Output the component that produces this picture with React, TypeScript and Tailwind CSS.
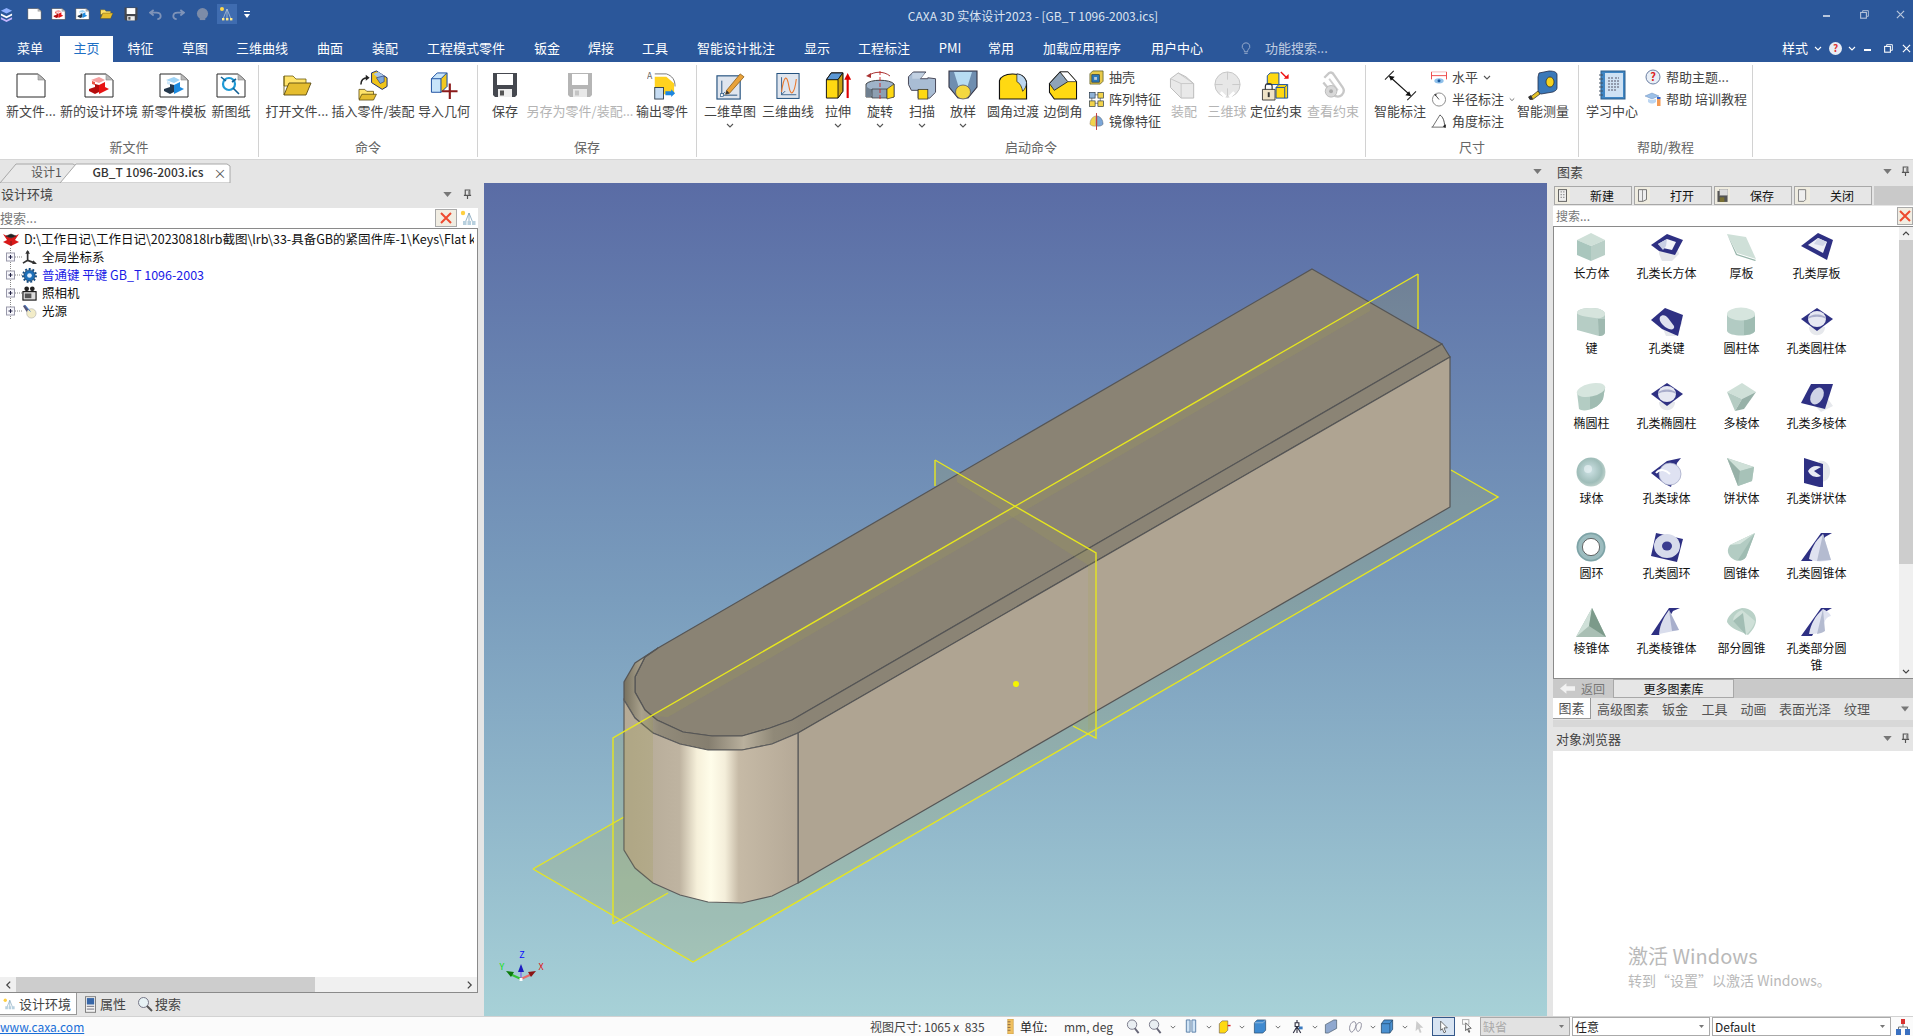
import React from 'react';

const Chev = ({ className = 'w-[8px] h-[5px]', stroke = '#555' }: { className?: string; stroke?: string }) => (
  <svg viewBox="0 0 8 5" className={className}>
    <path d="M1 1l3 3 3-3" fill="none" stroke={stroke} strokeWidth="1.1" />
  </svg>
);

const Tri = ({ className = 'w-[11px] h-[6px]' }: { className?: string }) => (
  <svg viewBox="0 0 10 6" className={className}>
    <path d="M0 0h10L5 6z" fill="#777" />
  </svg>
);

const Pin = () => (
  <svg viewBox="0 0 10 12" className="w-[9px] h-[11px]">
    <path d="M2.5 1h5v6h-5zM1 7h8M5 7v4" fill="none" stroke="#555" strokeWidth="1.3" />
    <path d="M5.5 1.5h1.6v5H5.5z" fill="#999" />
  </svg>
);

// ---- quick access / ribbon icons ----
const Doc = ({ children, className = 'w-[30px] h-[25px]' }: { children?: React.ReactNode; className?: string }) => (
  <svg viewBox="0 0 30 25" className={className}>
    <path d="M1 1h21l7 6v17H1z" fill="#fff" stroke="#2a2a2a" strokeWidth="1" />
    <path d="M22 1l7 6h-7z" fill="#b9b9b9" stroke="#888" strokeWidth="0.6" />
    {children}
  </svg>
);

const RedArt = () => (
  <g>
    <path d="M7 7l8-3 6 3-6 3z" fill="#f6a0a0" />
    <path d="M5 16l6-2v-3l4 1v7l-4 2-6-3z" fill="#b50d0d" />
    <path d="M15 12l6-3v5l4 2-10 5z" fill="#e81414" />
    <path d="M8 8l3 1v3l-3-1z" fill="#e54" />
  </g>
);

const BlueArt = () => (
  <g>
    <path d="M7 7l8-3 6 3-6 3z" fill="#9fd3f5" />
    <path d="M5 16l6-2v-3l4 1v7l-4 2-6-3z" fill="#24384d" />
    <path d="M15 12l6-3v5l4 2-10 5z" fill="#1d8be0" />
    <path d="M8 8l3 1v3l-3-1z" fill="#cfe8fa" />
  </g>
);

const DrawArt = () => (
  <g fill="none" stroke="#1d9ad6" strokeWidth="2.2">
    <circle cx="13" cy="11" r="6" />
    <path d="M17 15l6 6M5 4l5 4M20 6l-4 3" stroke="#125f93" strokeWidth="1.6" />
  </g>
);

const Folder = ({ className = 'w-[30px] h-[26px]' }: { className?: string }) => (
  <svg viewBox="0 0 30 26" className={className}>
    <path d="M2 4h9l3 3h10v7H2z" fill="#ffe36a" stroke="#6a5a10" strokeWidth="0.8" />
    <path d="M2 23L7 11h22l-5 12z" fill="#e5bd2f" stroke="#5a4a10" strokeWidth="0.9" />
    <path d="M2 4v19" stroke="#6a5a10" strokeWidth="0.9" />
  </svg>
);

const Disk = ({ gray = false, className = 'w-[26px] h-[26px]' }: { gray?: boolean; className?: string }) => {
  const b = gray ? '#b5b5b5' : '#45484f';
  return (
    <svg viewBox="0 0 26 26" className={className}>
      <path d="M1 1h24v22l-2 2H3l-2-2z" fill={b} />
      <rect x="5" y="2" width="16" height="11" fill="#fff" />
      <rect x="6" y="17" width="14" height="8" fill={gray ? '#e8e8e8' : '#eee'} />
      <rect x="8" y="18.5" width="4" height="5" fill={gray ? '#c5c5c5' : '#555'} />
    </svg>
  );
};

const Insert = () => (
  <svg viewBox="0 0 32 32" className="w-[31px] h-[31px]">
    <path d="M14 3l5-2 11 7v9l-5 3-11-7z" fill="#f0c419" stroke="#1b2b6b" strokeWidth="1" />
    <path d="M16 4l5-2 6 4-5 3z" fill="#aac6e8" />
    <path d="M19 8l8-2v6l-4 2z" fill="#7ea6d8" stroke="#1b2b6b" strokeWidth="0.6" />
    <path d="M1 20h6l2 2h7v8H1z" fill="#ffe36a" stroke="#5a4a10" strokeWidth="0.8" />
    <path d="M1 31l3-6h15l-3 6z" fill="#e5bd2f" stroke="#5a4a10" strokeWidth="0.8" />
    <path d="M3 15c0-5 3-7 7-7" fill="none" stroke="#222" strokeWidth="1.6" />
    <path d="M8 5l4 3-4 3z" fill="#222" />
  </svg>
);

const ImportGeo = () => (
  <svg viewBox="0 0 30 30" className="w-[30px] h-[29px]">
    <path d="M2 8l6-6h10v14l-6 6H2z" fill="#c7e4fa" stroke="#1b4fa0" strokeWidth="1" />
    <path d="M2 8h10l6-6M12 8v14" fill="none" stroke="#1b4fa0" strokeWidth="1" />
    <path d="M12 8l6-6v14l-6 6z" fill="#f2c820" stroke="#1b4fa0" strokeWidth="0.8" />
    <path d="M21 13v16M13 21h16" stroke="#8b1a1a" strokeWidth="2.2" />
  </svg>
);

const ExportPart = () => (
  <svg viewBox="0 0 32 30" className="w-[31px] h-[29px]">
    <text x="0" y="8" fontSize="9" fill="#666">A</text>
    <path d="M8 3h12c6 2 9 6 9 13" fill="none" stroke="#555" strokeWidth="0.8" />
    <path d="M8 6h12l8 7v11H8z" fill="#ffd21f" />
    <rect x="8" y="17" width="9" height="12" fill="#c6dcf2" stroke="#234" strokeWidth="0.9" />
    <path d="M19 21h6v-2l4 4-4 4v-2h-6z" fill="#1c86e0" />
  </svg>
);

const Sketch = () => (
  <svg viewBox="0 0 30 30" className="w-[29px] h-[29px]">
    <rect x="1" y="5" width="24" height="24" fill="#dfe5ee" stroke="#24527f" strokeWidth="1.2" />
    <path d="M6 10v15h16M6 25l3-3" stroke="#24527f" fill="none" strokeWidth="1" />
    <rect x="4.5" y="23.5" width="3" height="3" fill="#fff" stroke="#24527f" strokeWidth="0.7" />
    <path d="M11 20L25 3l4 3-15 17-4 1z" fill="#e8a23b" stroke="#8a5a15" strokeWidth="0.8" />
    <path d="M11 20l3 3-4 1z" fill="#333" />
  </svg>
);

const Curve = () => (
  <svg viewBox="0 0 26 30" className="w-[24px] h-[29px]">
    <rect x="1" y="2" width="24" height="27" fill="#dfe5ee" stroke="#24527f" strokeWidth="1.1" />
    <path d="M6 6v19h16M6 25l4-4" stroke="#24527f" fill="none" strokeWidth="0.9" />
    <path d="M6 22C9 2 12 4 14 16s6 8 8-8" fill="none" stroke="#e8792f" strokeWidth="1.2" />
  </svg>
);

const Extrude = () => (
  <svg viewBox="0 0 26 30" className="w-[26px] h-[29px]">
    <path d="M1 9l5-7h12v19l-5 7H1z" fill="#ffd912" stroke="#111" strokeWidth="1" />
    <path d="M1 9l5-7h12l-5 7z" fill="#5b97d4" stroke="#111" strokeWidth="1" />
    <path d="M13 9l5-7v19l-5 7z" fill="#c8a414" stroke="#111" strokeWidth="0.9" />
    <path d="M23 28V8" stroke="#d00" strokeWidth="2.2" />
    <path d="M19.5 9L23 2l3.5 7z" fill="#d00" />
  </svg>
);

const Revolve = () => (
  <svg viewBox="0 0 30 30" className="w-[30px] h-[30px]">
    <path d="M3 6c6-5 16-5 22 0" fill="none" stroke="#a33" strokeWidth="1" />
    <path d="M1 6l5-3v5z" fill="#a33" />
    <path d="M1 14c4-5 24-5 28 0v13H1z" fill="#9fb3c9" stroke="#333" strokeWidth="0.9" />
    <path d="M1 14c0 3 3 5 6 5l-1 8H1z" fill="#6f7f8f" />
    <path d="M7 19h15v9H7z" fill="#8d9fb2" stroke="#333" strokeWidth="0.7" />
    <path d="M22 19l7-5v13l-7 2z" fill="#ffd912" stroke="#333" strokeWidth="0.7" />
    <path d="M15 1v29" stroke="#c22" strokeWidth="0.9" strokeDasharray="4 2" />
  </svg>
);

const Sweep = () => (
  <svg viewBox="0 0 30 30" className="w-[30px] h-[29px]">
    <path d="M1 6l5-5h13l-6 7h8v-1l8 1v14l-6 6H11V20H4L1 14z" fill="#a9bdd4" stroke="#445" strokeWidth="1" />
    <path d="M5 2h13l-5 6H5z" fill="#c2d1e2" />
    <rect x="11" y="19" width="10" height="10" fill="#ffd912" stroke="#333" strokeWidth="0.8" />
  </svg>
);

const Loft = () => (
  <svg viewBox="0 0 30 30" className="w-[30px] h-[30px]">
    <path d="M1 1h28v16l-9 11H10L1 17z" fill="#6f8eb0" stroke="#334" strokeWidth="1.1" />
    <path d="M6 2h18l-5 16H11z" fill="#b7dcf2" />
    <ellipse cx="15" cy="22" rx="7.5" ry="7" fill="#f4d840" stroke="#556" strokeWidth="0.8" />
  </svg>
);

const Fillet = () => (
  <svg viewBox="0 0 30 30" className="w-[30px] h-[29px]">
    <path d="M1 10C4 1 24 1 28 9c1 1 1 2 1 4v16H1z" fill="#ffd912" stroke="#111" strokeWidth="1.2" />
    <path d="M19 3c5 0 9 4 10 9 0 4-2 7-4 9-1-4-2-8-6-10z" fill="#bcd6ee" stroke="#111" strokeWidth="0.7" />
  </svg>
);

const Chamfer = () => (
  <svg viewBox="0 0 30 30" className="w-[30px] h-[29px]">
    <path d="M1 13L12 1h8l9 10v18H6l-5-7z" fill="#ffd912" stroke="#111" strokeWidth="1.1" />
    <path d="M1 13L12 1l8 10-14 9z" fill="#8fa3b8" stroke="#111" strokeWidth="0.8" />
    <path d="M12 1h8l9 10h-9z" fill="#fff" stroke="#111" strokeWidth="0.7" />
  </svg>
);

const Shell = () => (
  <svg viewBox="0 0 16 16" className="w-[15px] h-[15px]">
    <path d="M1 4l3-3h11v11l-3 3H1z" fill="#e7c94a" stroke="#5a5a20" strokeWidth="0.8" />
    <rect x="3" y="5" width="8" height="8" fill="#2d78b8" stroke="#234" strokeWidth="0.7" />
    <rect x="5.5" y="7.5" width="3" height="3" fill="#bcd" />
  </svg>
);

const Pattern = () => (
  <svg viewBox="0 0 16 16" className="w-[15px] h-[15px]">
    <path d="M3 3h9v9H3z" fill="none" stroke="#555" strokeWidth="0.7" />
    <rect x="0.5" y="0.5" width="6" height="6" fill="#8fb2d6" stroke="#234" strokeWidth="0.7" />
    <rect x="9.5" y="0.5" width="6" height="6" fill="#f2d34b" stroke="#234" strokeWidth="0.7" />
    <rect x="0.5" y="9.5" width="6" height="6" fill="#f2d34b" stroke="#234" strokeWidth="0.7" />
    <rect x="9.5" y="9.5" width="6" height="6" fill="#f2d34b" stroke="#234" strokeWidth="0.7" />
  </svg>
);

const Mirror = () => (
  <svg viewBox="0 0 16 18" className="w-[15px] h-[17px]">
    <path d="M7 3C3 4 1 8 1 12c2 2 4 2 6 2z" fill="#f2d34b" stroke="#876" strokeWidth="0.5" />
    <path d="M9 3c4 1 6 5 6 9-2 2-4 2-6 2z" fill="#7ba6d8" stroke="#456" strokeWidth="0.5" />
    <path d="M8 0v18" stroke="#b33" strokeWidth="1" />
  </svg>
);

const Assembly = () => (
  <svg viewBox="0 0 30 30" className="w-[30px] h-[29px]">
    <path d="M1 8l8-6 8 4 8 7v15H12L1 17z" fill="#e9e9e9" stroke="#bbb" strokeWidth="1" />
    <path d="M9 2l16 11M12 28V13L1 8M12 13h13" fill="none" stroke="#c4c4c4" strokeWidth="0.9" />
  </svg>
);

const Ball = () => (
  <svg viewBox="0 0 30 30" className="w-[29px] h-[29px]">
    <circle cx="15" cy="14" r="13" fill="#e7e7e7" stroke="#c4c4c4" />
    <path d="M15 1v8M2 14h8M20 14h8M15 18v8" stroke="#c7c7c7" strokeWidth="0.9" />
    <path d="M8 22l5 5M22 22l-5 5" stroke="#fff" strokeWidth="3" />
  </svg>
);

const Locate = () => (
  <svg viewBox="0 0 32 32" className="w-[32px] h-[31px]">
    <path d="M7 6l3-3h9v12H7z" fill="#ffd912" stroke="#1b4fa0" strokeWidth="1" />
    <path d="M16 18l3-3h9v14H16z" fill="#ffd912" stroke="#1b4fa0" strokeWidth="1" />
    <path d="M16 18h9l3-3M25 18v11" fill="none" stroke="#1b4fa0" strokeWidth="1" />
    <path d="M2 20h13v11H2z" fill="#efe3c7" stroke="#333" strokeWidth="0.9" />
    <path d="M5 20v-3c0-4 7-4 7 0v3" fill="none" stroke="#333" strokeWidth="1.2" />
    <rect x="7.5" y="23" width="2" height="5" fill="#333" />
    <path d="M21 2l6 6" stroke="#e11" strokeWidth="1.4" />
    <path d="M24 9h5V4z" fill="#e11" />
  </svg>
);

const ViewCon = () => (
  <svg viewBox="0 0 26 30" className="w-[26px] h-[29px]">
    <path d="M4 7l5-5c2-1 4 0 5 2l9 13c2 3 1 6-1 8s-6 2-8 0L3 12" fill="none" stroke="#c8c8c8" strokeWidth="2.4" />
    <path d="M9 8l9 12" stroke="#cfcfcf" strokeWidth="2" />
    <circle cx="11" cy="21" r="6" fill="#d8d8d8" stroke="#bbb" />
    <circle cx="11" cy="21" r="2" fill="#aaa" />
  </svg>
);

const SmartDim = () => (
  <svg viewBox="0 0 34 32" className="w-[33px] h-[31px]">
    <path d="M1 10L10 1M24 31l9-9" stroke="#222" strokeWidth="1.1" />
    <path d="M6 7L27 26" stroke="#111" strokeWidth="1.2" />
    <path d="M5 6l6 1-4 4zM28 27l-6-1 4-4z" fill="#111" />
  </svg>
);

const Tape = () => (
  <svg viewBox="0 0 30 30" className="w-[30px] h-[30px]">
    <path d="M11 3l10-2c5 0 8 1 8 4v13c0 2-2 3-4 4l-12 2c-3-1-3-3-3-5V7z" fill="#3a78b8" stroke="#222d4a" strokeWidth="0.8" />
    <ellipse cx="22" cy="12" rx="4" ry="5" fill="#f5d21f" stroke="#222" strokeWidth="0.7" />
    <path d="M1 28l9-7 2 3-8 6z" fill="#e4c228" stroke="#222" strokeWidth="0.7" />
    <path d="M0 27l3-2 2 4-3 1z" fill="#333" />
  </svg>
);

const Book = () => (
  <svg viewBox="0 0 30 30" className="w-[30px] h-[30px]">
    <rect x="4" y="1" width="24" height="28" fill="#3f86c4" stroke="#2d5e8c" />
    <rect x="8" y="3" width="18" height="24" fill="#cfe2f4" />
    <path d="M11 8h5M18 8h4M11 11h12M11 14h12M11 17h12M11 20h8" stroke="#556" strokeWidth="1" strokeDasharray="2 1" />
    <path d="M2 5h4M2 9h4M2 13h4M2 17h4M2 21h4M2 25h4" stroke="#456" strokeWidth="1" />
  </svg>
);

const HelpIco = ({ className = 'w-[16px] h-[16px]' }: { className?: string }) => (
  <svg viewBox="0 0 16 16" className={className}>
    <circle cx="8" cy="8" r="7" fill="#e8eef6" stroke="#6b7fa3" />
    <text x="8" y="12" textAnchor="middle" fontSize="11" fontWeight="700" fill="#d22">?</text>
  </svg>
);

const Grad = () => (
  <svg viewBox="0 0 16 16" className="w-[16px] h-[16px]">
    <path d="M0 5l7-3 7 3-7 3z" fill="#9cc0e8" stroke="#5a7fae" strokeWidth="0.4" />
    <path d="M3 8v3c3 2 5 2 8 0V8l-4 1z" fill="#bcd6f2" />
    <rect x="12" y="8" width="3.5" height="7" fill="#f49a55" />
    <rect x="12" y="6" width="3.5" height="2" fill="#3a66c8" />
  </svg>
);

const HorizDim = () => (
  <svg viewBox="0 0 16 16" className="w-[16px] h-[15px]">
    <path d="M0 2v8M16 2v8M0 6h16" stroke="#e44" strokeWidth="1" />
    <path d="M0 2h16" stroke="#e88" strokeWidth="0.6" />
    <ellipse cx="8" cy="11.5" rx="5" ry="2.8" fill="#8fc0ea" />
    <circle cx="8" cy="11.5" r="1.6" fill="#1a5aa0" />
  </svg>
);

const RadiusDim = () => (
  <svg viewBox="0 0 16 16" className="w-[16px] h-[15px]">
    <circle cx="8" cy="8" r="7" fill="none" stroke="#888" />
    <path d="M8 8L4 3" stroke="#333" strokeWidth="0.9" />
    <path d="M3 2l3 .6-2 2z" fill="#333" />
  </svg>
);

const AngleDim = () => (
  <svg viewBox="0 0 16 16" className="w-[16px] h-[15px]">
    <path d="M0 14h15M1 14L9 1" stroke="#444" strokeWidth="0.8" />
    <path d="M9 1c3 2 5 6 5 13" fill="none" stroke="#333" strokeWidth="0.9" />
    <path d="M12 13l3 2 .5-4z" fill="#222" />
  </svg>
);

// ---- primitives in the palette ----
type Kind =
  | 'box' | 'hbox' | 'slab' | 'hslab' | 'key' | 'hkey' | 'cyl' | 'hcyl'
  | 'ell' | 'hell' | 'poly' | 'hpoly' | 'ball' | 'hball' | 'pie' | 'hpie'
  | 'tor' | 'htor' | 'cone' | 'hcone' | 'pyr' | 'hpyr' | 'pcone' | 'hpcone';

const navy = '#2e3083';

const Shape = ({ kind }: { kind: Kind }) => {
  const shapes: Record<Kind, React.ReactNode> = {
    box: (
      <>
        <path d="M1 8l14-7 14 7-14 6z" fill="#cfe0d8" />
        <path d="M1 8l14 6v15L1 23z" fill="#a9c6bd" />
        <path d="M29 8l-14 6v15l14-6z" fill="#b9cfc7" />
      </>
    ),
    hbox: (
      <>
        <path d="M8 22l3 7h10l7-7-2-8H8z" fill="#e4e6ea" />
        <path d="M0 13L16 2l16 6-8 15L8 19z" fill={navy} />
        <path d="M7 12l9-5 9 3-4 8-9-2z" fill="#f3f4fa" />
        <path d="M7 12l9-5-1 7-3 4z" fill="#c9cfe4" />
      </>
    ),
    slab: (
      <>
        <path d="M1 2l19 3 10 22-19-6z" fill="#cfe0d8" />
        <path d="M1 2l10 20 19 6-1 1-19-6z" fill="#97b5aa" />
      </>
    ),
    hslab: (
      <>
        <path d="M0 14L17 1l15 7-6 20z" fill={navy} />
        <path d="M7 13L17 6l9 4-4 11z" fill="#eff0f7" />
        <path d="M17 6l9 4-4 4-9-2z" fill="#d2d7e8" />
      </>
    ),
    key: (
      <>
        <path d="M1 6c0-4 8-5 15-5 8 0 13 3 13 6v17c0 4-3 5-6 5L1 23z" fill="#b6cdc5" />
        <path d="M1 6c0-4 8-5 15-5 8 0 13 3 13 6 0 3-5 5-10 4C10 10 1 8 1 6z" fill="#d6e4dd" />
        <path d="M22 12h7v13c0 3-3 4-6 4z" fill="#9fb9b0" />
      </>
    ),
    hkey: (
      <>
        <path d="M12 22l3 7h10l7-15-10 12z" fill="#e6e8ec" />
        <path d="M0 13L14 1l18 7-5 21-16-7z" fill={navy} />
        <path d="M9 10c2-3 6-2 8 1l6 8c1 3-2 4-5 3-3-1-5-3-7-5-2-2-3-5-2-7z" fill="#dfe1ee" />
      </>
    ),
    cyl: (
      <>
        <path d="M1 7v17c2 6 26 6 28 0V7z" fill="#b2cbc3" />
        <path d="M18 10h11v14c-2 3-7 4-11 4z" fill="#9fbcb2" />
        <ellipse cx="15" cy="7" rx="14" ry="6.5" fill="#d6e5de" />
      </>
    ),
    hcyl: (
      <>
        <path d="M8 20c0 11 16 11 16 0z" fill="#e6e8ec" />
        <path d="M0 12L16 1l16 11-16 12z" fill={navy} />
        <ellipse cx="16" cy="12" rx="9" ry="8" fill="#e6e8f2" />
        <path d="M7 12c0-6 18-6 18 0-4-3-14-3-18 0z" fill="#a9adcb" />
      </>
    ),
    ell: (
      <>
        <path d="M1 10L3 27c3 3 18 2 24-10l2-11z" fill="#b3ccc3" />
        <path d="M14 13l15-7-2 11c-3 6-8 9-13 10z" fill="#a0bcb2" />
        <ellipse cx="15" cy="8" rx="14.5" ry="6.5" fill="#d6e5de" transform="rotate(-12 15 8)" />
      </>
    ),
    hell: (
      <>
        <path d="M8 20c0 11 16 11 16 0z" fill="#e6e8ec" />
        <path d="M0 12L16 1l16 11-16 12z" fill={navy} />
        <ellipse cx="16" cy="12" rx="9" ry="8" fill="#e6e8f2" />
        <path d="M7 12c0-6 18-6 18 0-4-3-14-3-18 0z" fill="#a9adcb" />
      </>
    ),
    poly: (
      <>
        <path d="M1 10L16 1l14 9-14 7z" fill="#cfe0d8" />
        <path d="M1 10l15 7-7 12z" fill="#b5ccc3" />
        <path d="M30 10l-14 7-7 12 9-2z" fill="#97b1a8" />
      </>
    ),
    hpoly: (
      <>
        <path d="M22 10l10 14-12 6-8-8z" fill="#e6e8ec" />
        <path d="M0 21L10 2h22l-8 25z" fill={navy} />
        <ellipse cx="16" cy="14" rx="6" ry="9" transform="rotate(30 16 14)" fill="#cfd3e6" />
      </>
    ),
    ball: (
      <>
        <circle cx="15" cy="15" r="14.5" fill="url(#sphereG)" />
        <circle cx="12" cy="12" r="4" fill="#e6f0f2" opacity="0.7" />
      </>
    ),
    hball: (
      <>
        <path d="M0 16L16 4l14-3-4 5-6 24-6-3z" fill={navy} />
        <circle cx="19" cy="17" r="11" fill="#dfe2f2" stroke="#9ea3c2" strokeWidth="0.7" />
        <path d="M5 16c4-5 10-3 14 1" fill="none" stroke="#fff" strokeWidth="2" />
      </>
    ),
    pie: (
      <>
        <path d="M1 1l27 9-2 14-14 5z" fill="#b5ccc3" />
        <path d="M1 1l27 9-14 4z" fill="#cfe0d8" />
        <path d="M14 14l14-4-2 14-14 5z" fill="#a7c2b8" />
        <path d="M1 1l13 13-2 15z" fill="#97b1a8" />
      </>
    ),
    hpie: (
      <>
        <path d="M18 4c8-2 12 6 11 12-1 7-6 10-10 8z" fill="#e6e8ec" />
        <path d="M3 1l19 6v24L3 26z" fill={navy} />
        <path d="M7 14c3-5 8-6 13-4l-7 4 7 5c-5 2-10 1-13-5z" fill="#e8eaf4" />
      </>
    ),
    tor: (
      <>
        <circle cx="15" cy="15" r="11.5" fill="none" stroke="#9cbcbf" strokeWidth="6" />
        <circle cx="15" cy="15" r="13.5" fill="none" stroke="#7ea3a6" strokeWidth="1.5" />
        <circle cx="15" cy="15" r="8.6" fill="#fff" stroke="#444" strokeWidth="0.8" />
      </>
    ),
    htor: (
      <>
        <path d="M5 1l27 6-6 23L0 24z" fill={navy} />
        <ellipse cx="16" cy="14" rx="13" ry="12" fill="#d7dbeb" />
        <ellipse cx="16" cy="14" rx="5" ry="4.5" fill="#3a3c90" />
      </>
    ),
    cone: (
      <>
        <path d="M29 1L4 13c-4 5-2 11 3 14 4 3 10 2 13-2z" fill="#b3ccc3" />
        <path d="M29 1L12 28c3 1 6 0 8-3z" fill="#9fbcb2" />
        <path d="M29 1L4 13l10-1z" fill="#d6e5de" />
      </>
    ),
    hcone: (
      <>
        <path d="M20 1h11l-7 4-13 24H0z" fill={navy} />
        <path d="M22 2l8 26c-8 2-16 2-22-1 2-10 6-18 14-25z" fill="#dfe2f0" />
        <path d="M22 2l8 26-14 1z" fill="#b4bbd0" />
      </>
    ),
    pyr: (
      <>
        <path d="M16 1L0 30h30z" fill="#a9bfb4" />
        <path d="M16 1l-3 18L0 30z" fill="#cfe0d8" />
        <path d="M16 1l-3 18 17 11z" fill="#7c9a8a" />
      </>
    ),
    hpyr: (
      <>
        <path d="M18 1h11l-7 3-14 24H0z" fill={navy} />
        <path d="M18 3l10 20-20 4c1-10 5-17 10-24z" fill="#d9ddec" />
        <path d="M18 3l10 20-7 1z" fill="#a8afcc" />
      </>
    ),
    pcone: (
      <>
        <path d="M16 1c9 0 14 6 14 12s-4 11-8 15C14 24 5 22 1 15c0-5 6-12 15-14z" fill="#b9d1c7" />
        <path d="M16 3c-5 2-9 6-9 11l13 14c3-3 8-8 9-14z" fill="#cfe0d8" />
        <path d="M7 14l10-8 3 22z" fill="#a2beb4" />
      </>
    ),
    hpcone: (
      <>
        <path d="M20 1h11l-7 4-13 24H0z" fill={navy} />
        <path d="M22 2c4 2 7 4 8 7-5 1-8 6-8 15-5 3-10 3-14 3 2-10 6-18 14-25z" fill="#dfe2f0" />
        <path d="M22 2l2 22c-3 2-5 2-8 3z" fill="#b4bbd0" />
      </>
    ),
  };
  return (
    <svg viewBox="0 0 32 30" className="w-[32px] h-[30px]">
      {shapes[kind]}
    </svg>
  );
};

const palette: { label: string; kind: Kind }[] = [
  { label: '长方体', kind: 'box' },
  { label: '孔类长方体', kind: 'hbox' },
  { label: '厚板', kind: 'slab' },
  { label: '孔类厚板', kind: 'hslab' },
  { label: '键', kind: 'key' },
  { label: '孔类键', kind: 'hkey' },
  { label: '圆柱体', kind: 'cyl' },
  { label: '孔类圆柱体', kind: 'hcyl' },
  { label: '椭圆柱', kind: 'ell' },
  { label: '孔类椭圆柱', kind: 'hell' },
  { label: '多棱体', kind: 'poly' },
  { label: '孔类多棱体', kind: 'hpoly' },
  { label: '球体', kind: 'ball' },
  { label: '孔类球体', kind: 'hball' },
  { label: '饼状体', kind: 'pie' },
  { label: '孔类饼状体', kind: 'hpie' },
  { label: '圆环', kind: 'tor' },
  { label: '孔类圆环', kind: 'htor' },
  { label: '圆锥体', kind: 'cone' },
  { label: '孔类圆锥体', kind: 'hcone' },
  { label: '棱锥体', kind: 'pyr' },
  { label: '孔类棱锥体', kind: 'hpyr' },
  { label: '部分圆锥', kind: 'pcone' },
  { label: '孔类部分圆锥', kind: 'hpcone' },
];

// ---- ribbon ----
const tabs: { label: string; w: string; active?: boolean }[] = [
  { label: '菜单', w: 'w-[60px]' },
  { label: '主页', w: 'w-[53px]', active: true },
  { label: '特征', w: 'w-[55px]' },
  { label: '草图', w: 'w-[54px]' },
  { label: '三维曲线', w: 'w-[80px]' },
  { label: '曲面', w: 'w-[56px]' },
  { label: '装配', w: 'w-[54px]' },
  { label: '工程模式零件', w: 'w-[108px]' },
  { label: '钣金', w: 'w-[54px]' },
  { label: '焊接', w: 'w-[54px]' },
  { label: '工具', w: 'w-[54px]' },
  { label: '智能设计批注', w: 'w-[108px]' },
  { label: '显示', w: 'w-[54px]' },
  { label: '工程标注', w: 'w-[80px]' },
  { label: 'PMI', w: 'w-[52px]' },
  { label: '常用', w: 'w-[50px]' },
  { label: '加载应用程序', w: 'w-[112px]' },
  { label: '用户中心', w: 'w-[78px]' },
];

const Item = ({
  label,
  w,
  icon,
  disabled,
  more,
}: {
  label: string;
  w: string;
  icon: React.ReactNode;
  disabled?: boolean;
  more?: boolean;
}) => (
  <div className={`${w} flex flex-col items-center pt-[6px] shrink-0`}>
    <div className="h-[28px] flex items-center justify-center">{icon}</div>
    <div className={`mt-[4px] h-[16px] leading-[16px] whitespace-nowrap text-[13px] ${disabled ? 'text-[#b4b4b4]' : 'text-[#444]'}`}>
      {label}
    </div>
    {more && (
      <div className="mt-[4px]">
        <Chev />
      </div>
    )}
  </div>
);

const SmallRow = ({ icon, label, more, disabled }: { icon: React.ReactNode; label: string; more?: boolean; disabled?: boolean }) => (
  <div className="h-[22px] flex items-center gap-[5px] whitespace-nowrap">
    <div className="w-[16px] flex justify-center">{icon}</div>
    <span className={`text-[13px] leading-[16px] ${disabled ? 'text-[#b4b4b4]' : 'text-[#444]'}`}>{label}</span>
    {more && <Chev />}
  </div>
);

const Group = ({ w, title, children }: { w: string; title: string; children: React.ReactNode }) => (
  <div className={`${w} h-[92px] mt-[3px] border-r border-[#d2d2d2] flex flex-col shrink-0`}>
    <div className="h-[72px] flex">{children}</div>
    <div className="h-[20px] leading-[20px] text-center text-[13px] text-[#666]">{title}</div>
  </div>
);

const Ribbon = () => (
  <div className="h-[98px] bg-white border-b border-[#d6d6d6] flex">
    <Group w="w-[259px]" title="新文件">
      <Item w="w-[62px]" label="新文件..." icon={<Doc />} />
      <Item w="w-[74px]" label="新的设计环境" icon={<Doc><RedArt /></Doc>} />
      <Item w="w-[76px]" label="新零件模板" icon={<Doc><BlueArt /></Doc>} />
      <Item w="w-[38px]" label="新图纸" icon={<Doc><DrawArt /></Doc>} />
    </Group>
    <Group w="w-[219px]" title="命令">
      <Item w="w-[76px]" label="打开文件..." icon={<Folder />} />
      <Item w="w-[76px]" label="插入零件/装配" icon={<Insert />} />
      <Item w="w-[66px]" label="导入几何" icon={<ImportGeo />} />
    </Group>
    <Group w="w-[219px]" title="保存">
      <Item w="w-[54px]" label="保存" icon={<Disk />} />
      <Item w="w-[96px]" label="另存为零件/装配..." icon={<Disk gray />} disabled />
      <Item w="w-[68px]" label="输出零件" icon={<ExportPart />} />
    </Group>
    <Group w="w-[669px]" title="启动命令">
      <Item w="w-[66px]" label="二维草图" icon={<Sketch />} more />
      <Item w="w-[50px]" label="三维曲线" icon={<Curve />} />
      <Item w="w-[50px]" label="拉伸" icon={<Extrude />} more />
      <Item w="w-[34px]" label="旋转" icon={<Revolve />} more />
      <Item w="w-[50px]" label="扫描" icon={<Sweep />} more />
      <Item w="w-[32px]" label="放样" icon={<Loft />} more />
      <Item w="w-[68px]" label="圆角过渡" icon={<Fillet />} />
      <Item w="w-[32px]" label="边倒角" icon={<Chamfer />} />
      <div className="w-[84px] pl-[9px] pt-[1px] shrink-0">
        <SmallRow icon={<Shell />} label="抽壳" />
        <SmallRow icon={<Pattern />} label="阵列特征" />
        <SmallRow icon={<Mirror />} label="镜像特征" />
      </div>
      <Item w="w-[42px]" label="装配" icon={<Assembly />} disabled />
      <Item w="w-[44px]" label="三维球" icon={<Ball />} disabled />
      <Item w="w-[54px]" label="定位约束" icon={<Locate />} />
      <Item w="w-[60px]" label="查看约束" icon={<ViewCon />} disabled />
    </Group>
    <Group w="w-[213px]" title="尺寸">
      <div className="w-[4px] shrink-0" />
      <Item w="w-[60px]" label="智能标注" icon={<SmartDim />} />
      <div className="w-[85px] pl-[1px] pt-[1px] shrink-0">
        <SmallRow icon={<HorizDim />} label="水平" more />
        <SmallRow icon={<RadiusDim />} label="半径标注" more />
        <SmallRow icon={<AngleDim />} label="角度标注" />
      </div>
      <Item w="w-[56px]" label="智能测量" icon={<Tape />} />
    </Group>
    <Group w="w-[174px]" title="帮助/教程">
      <Item w="w-[66px]" label="学习中心" icon={<Book />} />
      <div className="pt-[1px] shrink-0">
        <SmallRow icon={<HelpIco />} label="帮助主题..." />
        <SmallRow icon={<Grad />} label="帮助 培训教程" />
      </div>
    </Group>
    <div className="flex-1" />
  </div>
);

const QuickAccess = () => (
  <div className="w-[260px] h-full flex items-center shrink-0">
    <svg viewBox="0 0 14 16" className="w-[13px] h-[15px] ml-0">
      <path d="M7 1l6 3-6 3-6-3z" fill="#8fb0ff" />
      <path d="M1 7l6 3 6-3v2l-6 3-6-3z" fill="#fff" />
      <path d="M1 11l6 3 6-3v2l-6 3-6-3z" fill="#c4b5ff" />
    </svg>
    <div className="ml-[14px]">
      <Doc className="w-[15px] h-[12px]" />
    </div>
    <div className="ml-[9px]"><Doc className="w-[15px] h-[12px]"><RedArt /></Doc></div>
    <div className="ml-[9px]"><Doc className="w-[15px] h-[12px]"><BlueArt /></Doc></div>
    <div className="ml-[9px]"><Folder className="w-[15px] h-[12px]" /></div>
    <div className="ml-[10px]"><Disk className="w-[14px] h-[14px]" /></div>
    <svg viewBox="0 0 14 12" className="w-[13px] h-[11px] ml-[11px]">
      <path d="M5 1L1 4l4 3M1 4h7c6 0 6 7 1 7" fill="none" stroke="#7f93b8" strokeWidth="2" />
    </svg>
    <svg viewBox="0 0 14 12" className="w-[13px] h-[11px] ml-[10px]">
      <path d="M9 1l4 3-4 3M13 4H6c-6 0-6 7-1 7" fill="none" stroke="#7f93b8" strokeWidth="2" />
    </svg>
    <svg viewBox="0 0 14 14" className="w-[13px] h-[13px] ml-[11px]">
      <circle cx="7" cy="6" r="6" fill="#7d8ca8" />
      <rect x="4" y="10" width="6" height="3" fill="#7d8ca8" />
    </svg>
    <div className="w-[20px] h-[20px] ml-[8px] bg-[#3f6cb0] flex items-center justify-center">
      <svg viewBox="0 0 16 16" className="w-[16px] h-[16px]">
        <circle cx="3" cy="3" r="2" fill="#ffd84a" />
        <path d="M8 3L4 13M8 3l4 10M8 3v10" stroke="#bcd" strokeWidth="0.7" />
        <rect x="3" y="12" width="2.4" height="2.4" fill="#ffe98a" />
        <rect x="7" y="12" width="2.4" height="2.4" fill="#ffe98a" />
        <rect x="11" y="12" width="2.4" height="2.4" fill="#ffe98a" />
      </svg>
    </div>
    <svg viewBox="0 0 6 7" className="w-[6px] h-[7px] ml-[7px]">
      <path d="M0 0h6v1H0zM0 3h6L3 7z" fill="#fff" />
    </svg>
  </div>
);

const Restore = ({ stroke = '#fff' }: { stroke?: string }) => (
  <svg viewBox="0 0 10 10" className="w-[9px] h-[9px]">
    <path d="M3 2.5V.7h6.3V7H7.5" fill="none" stroke={stroke} />
    <rect x="0.7" y="2.7" width="6.4" height="6.4" fill="none" stroke={stroke} strokeWidth="1.2" />
  </svg>
);

const XIco = ({ stroke = '#fff' }: { stroke?: string }) => (
  <svg viewBox="0 0 10 10" className="w-[9px] h-[9px]">
    <path d="M1 1l8 8M9 1l-8 8" stroke={stroke} strokeWidth="1.3" />
  </svg>
);

const Header = () => (
  <div className="h-[62px] bg-[#2b579a] flex flex-col shrink-0">
    <div className="h-[36px] flex pb-[8px]">
      <QuickAccess />
      <div className="flex-1 text-center text-[12px] leading-[32px] text-[#dde4f0]">CAXA 3D 实体设计2023 - [GB_T 1096-2003.ics]</div>
      <div className="w-[107px] flex items-center shrink-0 pl-[17px]">
        <div className="w-[7px] h-[2px] bg-[#b8c6dc] mt-[3px]" />
        <div className="ml-[30px]"><Restore stroke="#b8c6dc" /></div>
        <div className="ml-[27px]"><XIco stroke="#b8c6dc" /></div>
      </div>
    </div>
    <div className="h-[26px] flex">
      {tabs.map((t) => (
        <div
          key={t.label}
          className={`${t.w} shrink-0 flex items-center justify-center text-[13px] leading-[16px] pb-[2px] ${t.active ? 'bg-white text-[#1f6fc4]' : 'text-white'}`}
        >
          {t.label}
        </div>
      ))}
      <svg viewBox="0 0 12 16" className="w-[10px] h-[13px] ml-[25px] mt-[6px]">
        <path d="M6 1a4.5 4.5 0 0 0-3 8c1 1 1 2 1 3h4c0-1 0-2 1-3a4.5 4.5 0 0 0-3-8zM4 14h4" fill="none" stroke="#a9b9d4" />
      </svg>
      <div className="ml-[14px] text-[13px] leading-[24px] text-[#c0cce0]">功能搜索...</div>
      <div className="flex-1" />
      <div className="flex items-center pr-[2px] pb-[2px]">
        <span className="text-[13px] text-white leading-[16px]">样式</span>
        <div className="ml-[6px]"><Chev stroke="#fff" /></div>
        <div className="ml-[7px] w-[13px] h-[13px] rounded-full bg-[#e8edf5] flex items-center justify-center text-[10px] font-bold leading-none text-[#d33]">?</div>
        <div className="ml-[6px]"><Chev stroke="#fff" /></div>
        <div className="ml-[8px] w-[7px] h-[2px] bg-white mt-[3px]" />
        <div className="ml-[13px]"><Restore /></div>
        <div className="ml-[9px]"><XIco /></div>
      </div>
    </div>
  </div>
);

const DocTabs = () => (
  <div className="relative h-[23px] bg-[#e5e5e5] flex shrink-0">
    <svg viewBox="0 0 240 20" className="absolute left-0 top-[3px] w-[240px] h-[20px]">
      <path d="M0 20L16 1h57l3 2-12 17z" fill="#e9e9e9" stroke="#a8a8a8" />
      <path d="M60 20L76 1h151l3 2v17z" fill="#fff" stroke="#a8a8a8" />
    </svg>
    <div className="relative w-[88px] pl-[31px] pt-[3px] text-[12px] leading-[18px] text-[#555]">设计1</div>
    <div className="relative w-[120px] pt-[3px] text-[12px] leading-[18px] text-center font-medium text-[#333]">GB_T 1096-2003.ics</div>
    <div className="relative w-[16px] ml-[4px] pt-[4px] text-[#555] text-[13px] leading-[18px] text-center">×</div>
    <div className="flex-1" />
    <div className="relative pr-[5px] pt-[9px]"><Tri className="w-[9px] h-[5px]" /></div>
  </div>
);

const Expander = () => (
  <svg viewBox="0 0 22 18" className="w-[22px] h-[18px] shrink-0">
    <path d="M10.500 0v18M15 9h7" stroke="#888" strokeDasharray="1 1" />
    <rect x="6.500" y="5" width="8" height="8" fill="#f6f6fb" stroke="#99a" />
    <path d="M8.500 9h4M10.500 7v4" stroke="#224" />
  </svg>
);

const Tree = () => (
  <div className="flex-1 bg-white pt-[1px] overflow-hidden">
    <div className="h-[18px] flex items-center whitespace-nowrap overflow-hidden w-[474px]">
      <svg viewBox="0 0 18 14" className="w-[18px] h-[14px] ml-[2px] mr-[4px] shrink-0">
        <path d="M9 6l8-4-4 6 4 2-8 4-8-4 4-2-4-6z" fill="#d81818" />
        <path d="M9 6l-5-2 5-2 5 2zM9 14V9" fill="#222" stroke="#222" strokeWidth="0.5" />
      </svg>
      <span className="text-[12.5px] leading-[18px] text-[#111]">D:\工作日记\工作日记\20230818lrb截图\lrb\33-具备GB的紧固件库-1\Keys\Flat ke</span>
    </div>
    <div className="h-[18px] flex items-center">
      <Expander />
      <svg viewBox="0 0 16 16" className="w-[15px] h-[15px] mr-[5px] shrink-0">
        <path d="M6 1v10l8 3M6 11L1 14" fill="none" stroke="#333" strokeWidth="1.800" />
        <path d="M3.500 4L6 0l2.500 4zM12 11l4 4-5 0z" fill="#333" />
      </svg>
      <span className="text-[12.5px] leading-[18px] text-[#111]">全局坐标系</span>
    </div>
    <div className="h-[18px] flex items-center">
      <Expander />
      <svg viewBox="0 0 16 16" className="w-[15px] h-[15px] mr-[5px] shrink-0">
        <circle cx="8" cy="8" r="6" fill="#1d6fb8" stroke="#123" strokeWidth="0.6" />
        <circle cx="8" cy="8" r="7" fill="none" stroke="#124a80" strokeWidth="2" strokeDasharray="2 2" />
        <circle cx="8" cy="8" r="2.500" fill="#ddeeff" />
      </svg>
      <span className="text-[12.5px] leading-[18px] text-[#1a1ae6]">普通键 平键 GB_T 1096-2003</span>
    </div>
    <div className="h-[18px] flex items-center">
      <Expander />
      <svg viewBox="0 0 16 16" className="w-[15px] h-[15px] mr-[5px] shrink-0">
        <circle cx="5" cy="3" r="2.500" fill="#222" />
        <circle cx="11" cy="3" r="2.500" fill="#222" />
        <rect x="1" y="6" width="14" height="9" fill="#ddd" stroke="#111" strokeWidth="1.200" />
        <rect x="3" y="8" width="7" height="5" fill="#555" />
      </svg>
      <span className="text-[12.5px] leading-[18px] text-[#111]">照相机</span>
    </div>
    <div className="h-[18px] flex items-center">
      <Expander />
      <svg viewBox="0 0 16 16" className="w-[15px] h-[15px] mr-[5px] shrink-0">
        <path d="M1 2l2-1 6 7-3 2z" fill="#557" />
        <circle cx="10" cy="10" r="5" fill="#f2ecc8" stroke="#aaa" strokeWidth="0.6" />
        <path d="M3 1l6 7" stroke="#3a7ad0" strokeWidth="1" />
      </svg>
      <span className="text-[12.5px] leading-[18px] text-[#111]">光源</span>
    </div>
  </div>
);

const RedX = ({ className }: { className: string }) => (
  <div className={`${className} bg-[#f1ede2] border border-[#aaa] flex items-center justify-center shrink-0`}>
    <svg viewBox="0 0 12 12" className="w-[12px] h-[12px]">
      <path d="M1 1l10 10M11 1L1 11" stroke="#ee4a30" strokeWidth="2" />
    </svg>
  </div>
);

const TreeStar = ({ className = 'w-[16px] h-[16px]' }: { className?: string }) => (
  <svg viewBox="0 0 16 16" className={className}>
    <circle cx="3" cy="3" r="2.200" fill="#ffcf40" />
    <path d="M9 3L5 13M9 3l4 10M9 3v10" stroke="#7ba0b8" strokeWidth="0.8" />
    <rect x="3" y="11" width="3.500" height="4" fill="#b8d0de" />
    <rect x="7.500" y="11" width="3.500" height="4" fill="#b8d0de" />
    <rect x="12" y="11" width="3.500" height="4" fill="#b8d0de" />
  </svg>
);

const LeftPanel = () => (
  <div className="w-[484px] flex flex-col shrink-0 bg-[#e5e5e5]">
    <div className="h-[25px] flex items-center pl-[1px] pr-[12px] pb-[3px]">
      <span className="text-[13px] leading-[16px] text-[#444]">设计环境</span>
      <div className="flex-1" />
      <Tri className="w-[9px] h-[5px]" />
      <div className="ml-[11px]"><Pin /></div>
    </div>
    <div className="h-[20px] w-[478px] bg-white flex items-center">
      <span className="text-[13px] leading-[16px] text-[#777]">搜索...</span>
      <div className="flex-1" />
      <RedX className="w-[22px] h-[18px]" />
      <div className="ml-[3px] mr-[2px]"><TreeStar /></div>
    </div>
    <div className="w-[478px] h-[765px] flex flex-col border-t border-r border-b border-[#8a8a8a]">
      <Tree />
      <div className="h-[15px] bg-[#f0f0f0] flex items-center">
        <div className="w-[16px] flex justify-center"><Chev className="w-[9px] h-[6px] rotate-90" stroke="#444" /></div>
        <div className="w-[299px] h-full bg-[#cdcdcd]" />
        <div className="flex-1" />
        <div className="w-[16px] flex justify-center"><Chev className="w-[9px] h-[6px] -rotate-90" stroke="#444" /></div>
      </div>
    </div>
    <div className="flex-1 flex items-start">
      <div className="w-[77px] h-[22px] bg-white border-r border-b border-[#999] flex items-center pl-[3px]">
        <TreeStar className="w-[12px] h-[14px]" />
        <span className="ml-[4px] text-[13px] leading-[16px] text-[#444]">设计环境</span>
      </div>
      <div className="h-[22px] flex items-center ml-[8px]">
        <svg viewBox="0 0 12 18" className="w-[11px] h-[17px]">
          <rect x="0.500" y="0.500" width="11" height="17" fill="#f2f2f2" stroke="#777" />
          <rect x="2" y="2" width="8" height="7" fill="#3766a8" />
          <path d="M2 11h8M2 14h8" stroke="#667" />
        </svg>
        <span className="ml-[4px] text-[13px] leading-[16px] text-[#444]">属性</span>
      </div>
      <div className="h-[22px] flex items-center ml-[11px]">
        <svg viewBox="0 0 16 16" className="w-[16px] h-[16px]">
          <circle cx="6.500" cy="6.500" r="5" fill="#e7f2f5" stroke="#778" />
          <path d="M10 10l5 5" stroke="#555" strokeWidth="2" />
        </svg>
        <span className="ml-[2px] text-[13px] leading-[16px] text-[#444]">搜索</span>
      </div>
    </div>
  </div>
);

const Viewport = () => (
  <div className="w-[1063px] bg-linear-to-b from-[#5a6ca5] via-[#7a9dbd] to-[#a7d1d7] shrink-0">
    <svg viewBox="484 183 1063 833" className="block w-[1063px] h-[833px]">
      <defs>
        <linearGradient id="cylG" gradientUnits="userSpaceOnUse" x1="624" x2="798" y1="0" y2="0">
          <stop offset="0" stopColor="#b5aa95" />
          <stop offset="0.17" stopColor="#b9ae9b" />
          <stop offset="0.32" stopColor="#bfb4a1" />
          <stop offset="0.42" stopColor="#f6f0da" />
          <stop offset="0.5" stopColor="#fffdea" />
          <stop offset="0.58" stopColor="#f4eeda" />
          <stop offset="0.66" stopColor="#c6baa6" />
          <stop offset="1" stopColor="#b5a997" />
        </linearGradient>
        <linearGradient id="chamG" gradientUnits="userSpaceOnUse" x1="624" x2="800" y1="0" y2="0">
          <stop offset="0" stopColor="#77715f" />
          <stop offset="0.1" stopColor="#a9a18c" />
          <stop offset="0.2" stopColor="#928b7a" />
          <stop offset="0.48" stopColor="#857e6f" />
          <stop offset="0.68" stopColor="#b9b09d" />
          <stop offset="0.85" stopColor="#908978" />
          <stop offset="1" stopColor="#8b8475" />
        </linearGradient>
      </defs>
      {/* planes behind the part */}
      <polygon points="533,869 693,962 1498,497 1338,404" fill="#a8a850" opacity="0.22" />
      <polygon points="613,738 1418,274 1418,460 613,924" fill="#a8a850" opacity="0.22" />
      <polygon points="935,460 1096,553 1096,738 935,645" fill="#a8a850" opacity="0.22" />
      <path d="M533 869L693 962L1498 497L1451 470M533 869L624 817M613 924L668 893M935 460V486" fill="none" stroke="#e6e61e" strokeWidth="1.400" />
      <path d="M1418 274V329" stroke="#c8c83c" strokeWidth="1.800" />
      {/* key */}
      <polygon points="1312,269 1442,344 792,720 770,728 742,736 712,736 683,732 657,720 645,710 635,692 635,677 645,657 658,648" fill="#8a8374" stroke="#555" strokeWidth="1.200" />
      <polygon points="658,648 635,663 624,682 624,700 635,718 653,733 680,744 708,750 742,750 772,744 798,733 1450,357 1442,344 792,720 770,728 742,736 712,736 683,732 657,720 645,710 635,692 635,677 645,657" fill="url(#chamG)" stroke="#555" strokeWidth="1.200" />
      <polygon points="798,733 1450,357 1450,507 798,883" fill="#afa492" stroke="#555" strokeWidth="1.200" />
      <polygon points="624,700 635,718 653,733 680,744 708,750 742,750 772,744 798,733 798,883 772,896 742,903 708,902 680,895 653,883 635,868 624,850" fill="url(#cylG)" stroke="#5c5c5c" strokeWidth="1.200" />
      {/* plane tint over the part */}
      <polygon points="624,733 653,716 653,883 635,868 624,850" fill="#9a9a45" opacity="0.2" />
      <polygon points="653,716 1370,302 1370,311 668,717" fill="#a8a850" opacity="0.18" />
      <polygon points="957,473 1096,553 1096,726 1088,730 1088,565 957,482" fill="#a8a850" opacity="0.18" />
      <path d="M613 924V738L1418 274M935 460L1096 553V738L1073 726" fill="none" stroke="#e6e61e" strokeWidth="1.400" />
      <circle cx="1016" cy="684" r="3" fill="#f5f500" />
      {/* triad */}
      <path d="M521 979V966" stroke="#8a8ae8" strokeWidth="2" />
      <path d="M518 972l3-8 3 8z" fill="#1c1cc0" />
      <path d="M521 979L510 974" stroke="#35c235" strokeWidth="2" />
      <path d="M506 971l8 1-3 5z" fill="#0a7a0a" />
      <path d="M521 979L532 974" stroke="#e86a6a" strokeWidth="2" />
      <path d="M536 971l-8 1 3 5z" fill="#8a1414" />
      <rect x="519.500" y="978" width="3" height="3" fill="#fff" />
      <text x="522" y="958" textAnchor="middle" fontSize="9" fill="#0a0aff">Z</text>
      <text x="502" y="970" textAnchor="middle" fontSize="9" fill="#10e010">Y</text>
      <text x="541" y="970" textAnchor="middle" fontSize="9" fill="#e01010">X</text>
    </svg>
  </div>
);

const PaletteBtn = ({ label, icon }: { label: string; icon: React.ReactNode }) => (
  <div className="w-[78px] h-[19px] mr-[2px] border border-[#a8a8a8] bg-[#e6e6e6] flex items-center shrink-0">
    <div className="w-[15px] h-full bg-[#efece0] flex items-center justify-center">{icon}</div>
    <div className="flex-1 text-center text-[12px] leading-[16px] text-[#111] pl-[3px]">{label}</div>
  </div>
);

const RightPanel = () => (
  <div className="w-[366px] flex flex-col shrink-0 bg-[#e5e5e5]">
    <div className="h-[23px] flex items-center pl-[10px] pr-[3px]">
      <span className="text-[13px] leading-[16px] text-[#444]">图素</span>
      <div className="flex-1" />
      <Tri className="w-[9px] h-[5px]" />
      <div className="ml-[9px]"><Pin /></div>
    </div>
    <div className="h-[23px] flex pl-[7px] pt-[3px]">
      <PaletteBtn label="新建" icon={<svg viewBox="0 0 10 14" className="w-[9px] h-[13px]"><rect x="0.500" y="0.500" width="9" height="13" fill="#eee" stroke="#555" /><path d="M3 3h1M6 3h1M3 6h1M6 6h1M3 9h1M6 9h1" stroke="#666" strokeWidth="1.500" /></svg>} />
      <PaletteBtn label="打开" icon={<svg viewBox="0 0 10 14" className="w-[9px] h-[13px]"><path d="M.5.5h9v11l-4 2H.5z" fill="#eee" stroke="#666" /><path d="M5 .5v13" stroke="#888" /></svg>} />
      <PaletteBtn label="保存" icon={<svg viewBox="0 0 12 14" className="w-[11px] h-[13px]"><rect x="0.500" y="2" width="11" height="12" fill="#555" /><rect x="3" y="0" width="9" height="7" fill="#ddd" stroke="#888" strokeWidth="0.500" /><rect x="3" y="9" width="5" height="5" fill="#7a7030" /></svg>} />
      <PaletteBtn label="关闭" icon={<svg viewBox="0 0 10 14" className="w-[9px] h-[13px]"><path d="M.5.5h8v11l-2 2H.5z" fill="#eee" stroke="#777" /></svg>} />
      <div className="flex-1 h-[19px] bg-[#c9c9c9]" />
    </div>
    <div className="h-[20px] ml-[6px] bg-white flex items-center pb-[1px]">
      <span className="text-[12px] leading-[16px] text-[#777] pl-[3px]">搜索...</span>
      <div className="flex-1" />
      <RedX className="w-[16px] h-[18px]" />
    </div>
    <div className="h-[452px] ml-[6px] flex bg-white border-t border-l border-[#8a8a8a] overflow-hidden">
      <div className="w-[345px] grid grid-cols-[repeat(4,75px)] auto-rows-[75px]">
        {palette.map((p) => (
          <div key={p.label} className="flex flex-col items-center pt-[5px]">
            <Shape kind={p.kind} />
            <div className="w-[62px] mt-[2px] text-center text-[12px] leading-[17px] text-[#111]">{p.label}</div>
          </div>
        ))}
      </div>
      <div className="flex-1 flex flex-col bg-[#f0f0f0]">
        <div className="h-[13px] flex items-center justify-center"><Chev className="w-[8px] h-[5px] rotate-180" stroke="#444" /></div>
        <div className="h-[324px] bg-[#cdcdcd]" />
        <div className="flex-1" />
        <div className="h-[13px] flex items-center justify-center"><Chev stroke="#444" /></div>
      </div>
    </div>
    <div className="h-[20px] ml-[6px] flex border-t border-[#8a8a8a] bg-[#c9c9c9]">
      <div className="w-[53px] ml-[6px] flex items-center bg-[#c9c9c9] shrink-0">
        <svg viewBox="0 0 14 10" className="w-[15px] h-[11px] ml-[1px]"><path d="M0 5l6-5v3h8v4H6v3z" fill="#f2f2f2" /></svg>
        <span className="ml-[6px] text-[12px] leading-[16px] text-[#777]">返回</span>
      </div>
      <div className="w-[121px] ml-[1px] border border-[#a8a8a8] bg-[#e6e6e6] text-center text-[12px] leading-[17px] text-[#111] shrink-0">更多图素库</div>
    </div>
    <div className="h-[22px] ml-[6px] flex items-center text-[13px] leading-[16px] text-[#555] pb-[1px]">
      <div className="w-[38px] h-[21px] bg-white border-r border-b border-[#999] flex items-center justify-center shrink-0">图素</div>
      <div className="w-[64px] text-center shrink-0">高级图素</div>
      <div className="w-[40px] text-center shrink-0">钣金</div>
      <div className="w-[39px] text-center shrink-0">工具</div>
      <div className="w-[39px] text-center shrink-0">动画</div>
      <div className="w-[64px] text-center shrink-0">表面光泽</div>
      <div className="w-[40px] text-center shrink-0">纹理</div>
      <div className="ml-[24px]"><Tri className="w-[8px] h-[6px]" /></div>
    </div>
    <div className="h-[7px] bg-[#d8d8d8] ml-[6px] shrink-0" />
    <div className="h-[24px] flex items-center pl-[9px] pr-[3px] pb-[1px]">
      <span className="text-[13px] leading-[16px] text-[#444]">对象浏览器</span>
      <div className="flex-1" />
      <Tri className="w-[9px] h-[5px]" />
      <div className="ml-[9px]"><Pin /></div>
    </div>
    <div className="flex-1 ml-[6px] bg-white pl-[75px] pt-[193px]">
      <div className="text-[20px] leading-[24px] text-[#b9b9b9]">激活 Windows</div>
      <div className="text-[14px] leading-[20px] text-[#b9b9b9] mt-[2px] whitespace-nowrap">转到“设置”以激活 Windows。</div>
    </div>
  </div>
);

const Zoomer = () => (
  <svg viewBox="0 0 14 16" className="w-[14px] h-[15px]">
    <circle cx="6" cy="6" r="5" fill="#e9eef2" stroke="#778" />
    <path d="M9 10l4 5" stroke="#667" strokeWidth="2" />
  </svg>
);

const statusTools: { w: string; icon: React.ReactNode; more: boolean }[] = [
  { w: 'w-[22px]', more: false, icon: <Zoomer /> },
  { w: 'w-[36px]', more: true, icon: <Zoomer /> },
  {
    w: 'w-[33px]',
    more: true,
    icon: (
      <svg viewBox="0 0 14 16" className="w-[14px] h-[15px]">
        <path d="M2 1h4v13H2zM8 1h4v13H8z" fill="#cfe3f5" stroke="#5a7fa8" />
      </svg>
    ),
  },
  {
    w: 'w-[36px]',
    more: true,
    icon: (
      <svg viewBox="0 0 14 16" className="w-[14px] h-[15px]">
        <path d="M2 5l3-3h6v10l-3 3H2z" fill="#ffd912" stroke="#765" strokeWidth="0.7" />
        <path d="M11 7h3" stroke="#d22" strokeWidth="1.500" />
      </svg>
    ),
  },
  {
    w: 'w-[37px]',
    more: true,
    icon: (
      <svg viewBox="0 0 14 16" className="w-[14px] h-[15px]">
        <path d="M1 4l3-3h9v11l-3 3H1z" fill="#3f8ad0" stroke="#246" strokeWidth="0.7" />
        <path d="M1 4h9l3-3" fill="none" stroke="#bcd" strokeWidth="0.7" />
      </svg>
    ),
  },
  {
    w: 'w-[34px]',
    more: true,
    icon: (
      <svg viewBox="0 0 14 16" className="w-[14px] h-[15px]">
        <path d="M7 1v3M5 4h4v4H5zM7 8L3 15M7 8l4 7M7 8v7" fill="none" stroke="#334" strokeWidth="1.200" />
        <rect x="9" y="8" width="4" height="3" fill="#3a7ac0" />
      </svg>
    ),
  },
  {
    w: 'w-[24px]',
    more: false,
    icon: (
      <svg viewBox="0 0 14 16" className="w-[14px] h-[15px]">
        <path d="M1 15V6l9-5h3v9l-9 5z" fill="#8fa8cf" stroke="#456" strokeWidth="0.7" />
      </svg>
    ),
  },
  {
    w: 'w-[32px]',
    more: true,
    icon: (
      <svg viewBox="0 0 14 16" className="w-[14px] h-[15px]">
        <path d="M2 13c-2-3 0-9 3-10s4 3 2 7-4 5-5 3zM8 8c1-3 3-5 5-4s0 8-2 9-3-2-3-5z" fill="none" stroke="#889" />
      </svg>
    ),
  },
  {
    w: 'w-[32px]',
    more: true,
    icon: (
      <svg viewBox="0 0 14 16" className="w-[14px] h-[15px]">
        <path d="M1 5l3-4h9v10l-3 4H1z" fill="#4a90d0" stroke="#246" strokeWidth="0.8" />
        <path d="M1 5h9l3-4M10 5v10" fill="none" stroke="#246" strokeWidth="0.7" />
      </svg>
    ),
  },
];

const StatusBar = () => (
  <div className="h-[20px] bg-[#fbfbfb] border-t border-[#d2d2d2] flex items-center text-[12px] leading-[16px] text-[#444] shrink-0">
    <div className="w-[870px] shrink-0 text-[#1a6fd8] underline">www.caxa.com</div>
    <div className="w-[136px] shrink-0 whitespace-nowrap">视图尺寸: 1065 x&nbsp;&nbsp;835</div>
    <svg viewBox="0 0 8 16" className="w-[9px] h-[15px] shrink-0">
      <path d="M1 0h6v16H1z" fill="#f0c060" stroke="#b88a30" strokeWidth="0.5" />
      <path d="M1 3h3M1 6h3M1 9h3M1 12h3" stroke="#864" />
    </svg>
    <div className="w-[49px] pl-[5px] shrink-0 text-[#222]">单位:</div>
    <div className="w-[62px] shrink-0">mm, deg</div>
    {statusTools.map((t, i) => (
      <div key={i} className={`${t.w} flex items-center gap-[8px] shrink-0`}>
        {t.icon}
        {t.more ? <Chev className="w-[6px] h-[4px]" /> : null}
      </div>
    ))}
    <svg viewBox="0 0 14 16" className="w-[12px] h-[14px] shrink-0 ml-[1px] mr-[7px]">
      <path d="M4 1l8 8H8l2 5-2 1-2-5-3 3z" fill="#ccc" />
    </svg>
    <div className="w-[23px] h-[19px] shrink-0 bg-[#d8e4f2] border border-[#34588a] flex items-center justify-center">
      <svg viewBox="0 0 12 16" className="w-[10px] h-[14px]"><path d="M2 1l8 8H6l2 5-2 1-2-5-2 2z" fill="#fff" stroke="#333" strokeWidth="0.8" /></svg>
    </div>
    <div className="w-[25px] flex justify-center shrink-0">
      <svg viewBox="0 0 12 16" className="w-[11px] h-[15px]"><path d="M4 4l6 6H7l1.500 4-1 .5-1.500-4-2 2z" fill="#fff" stroke="#333" strokeWidth="0.8" /><rect x="0.500" y="0.500" width="7" height="5" fill="none" stroke="#aaa" /></svg>
    </div>
    <div className="w-[90px] h-[19px] border border-[#aaa] bg-[#e2e2e2] text-[#aaa] flex items-center pl-[2px] shrink-0">
      <span className="flex-1">缺省</span>
      <Tri className="w-[5px] h-[3px] mr-[5px]" />
    </div>
    <div className="w-[138px] h-[19px] ml-[2px] border border-[#aaa] bg-white text-[#222] flex items-center pl-[2px] shrink-0">
      <span className="flex-1">任意</span>
      <Tri className="w-[5px] h-[3px] mr-[5px]" />
    </div>
    <div className="w-[179px] h-[19px] ml-[2px] border border-[#aaa] bg-white text-[#222] flex items-center pl-[2px] shrink-0">
      <span className="flex-1">Default</span>
      <Tri className="w-[5px] h-[3px] mr-[5px]" />
    </div>
    <svg viewBox="0 0 14 16" className="w-[14px] h-[16px] ml-[5px] shrink-0">
      <rect x="5" y="0" width="4" height="5" fill="#d83030" />
      <rect x="0" y="10" width="5" height="6" fill="#3a70c0" />
      <rect x="9" y="10" width="5" height="6" fill="#3a70c0" />
      <path d="M7 5v3M2.500 10V8h9v2" fill="none" stroke="#777" />
    </svg>
  </div>
);

const App = () => (
  <div className="w-[1913px] h-[1036px] flex flex-col overflow-hidden bg-[#e5e5e5] font-['Noto_Sans_CJK_SC',sans-serif]">
    <svg className="absolute w-0 h-0">
      <defs>
        <radialGradient id="sphereG" cx="0.45" cy="0.45" r="0.6">
          <stop offset="0" stopColor="#cfe3e6" />
          <stop offset="0.7" stopColor="#9fbdb9" />
          <stop offset="1" stopColor="#c5d6d0" />
        </radialGradient>
      </defs>
    </svg>
    <Header />
    <Ribbon />
    <div className="flex-1 flex min-h-0">
      <div className="w-[1547px] flex flex-col shrink-0">
        <DocTabs />
        <div className="flex-1 flex min-h-0">
          <LeftPanel />
          <Viewport />
        </div>
      </div>
      <RightPanel />
    </div>
    <StatusBar />
  </div>
);

export default App;
